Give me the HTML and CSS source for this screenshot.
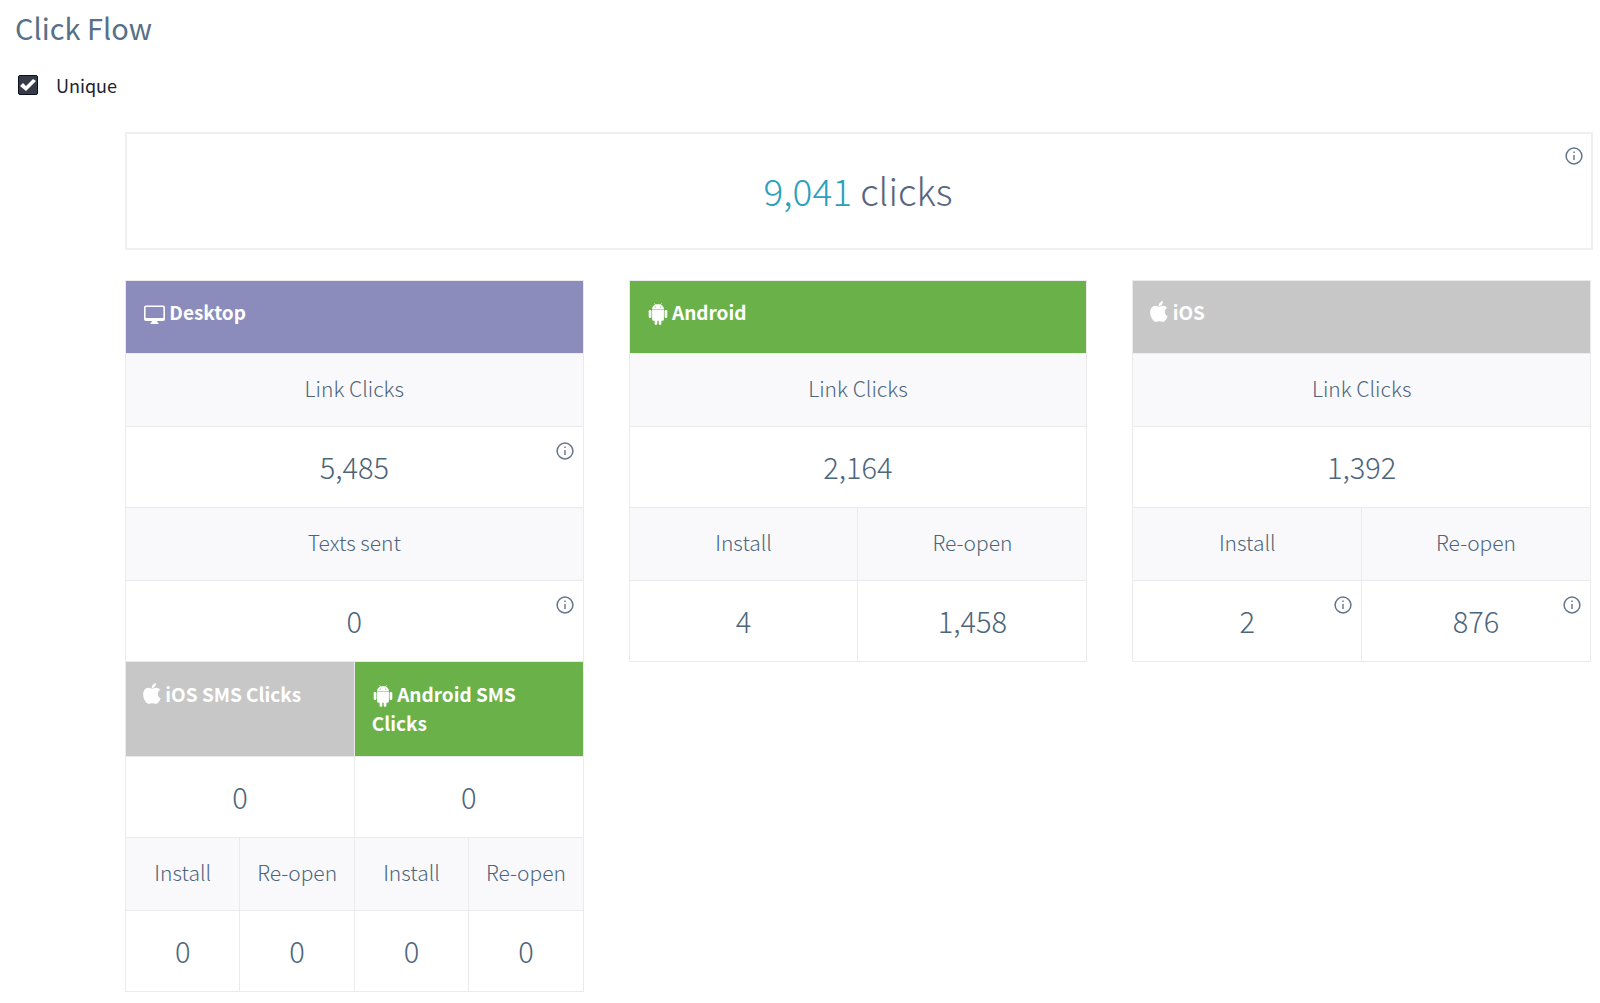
FILE: index.html
```html
<!DOCTYPE html>
<html lang="en">
<head>
<meta charset="utf-8">
<meta name="viewport" content="width=device-width, initial-scale=1">
<title>Click Flow</title>
<link rel="stylesheet" href="styles.css">
</head>
<body>
<svg class="sprite" aria-hidden="true">
  <symbol id="info" viewBox="0 0 18 18">
    <circle cx="9" cy="9" r="7.9" fill="none" stroke="currentColor" stroke-width="1.5"/>
    <path d="M8.3 4.6h1.4v1.5H8.3zM8.3 7.9h1.4v5.2H8.3z" fill="currentColor"/>
  </symbol>
  <symbol id="desktop" viewBox="0 0 21 20">
    <path fill="currentColor" fill-rule="evenodd" d="M2 0.5h17a2 2 0 0 1 2 2v11.500a2 2 0 0 1-2 2h-6c0 1.400 1.500 1.700 1.500 2.500q0 .5-.5.5H7q-.5 0-.5-.5C6.500 17.700 8 17.400 8 16H2a2 2 0 0 1-2-2V2.500a2 2 0 0 1 2-2zM2.200 2a.6.6 0 0 0-.6.6v9.800a.6.6 0 0 0 .6.6h16.600a.6.6 0 0 0 .6-.6V2.600a.6.6 0 0 0-.6-.6z"/>
  </symbol>
  <symbol id="android" viewBox="0 0 19 22">
    <path fill="currentColor" fill-rule="evenodd" d="M3.500 6.400C3.600 4.300 4.800 2.700 6.600 1.800L5.600.2l.4-.2 1 1.600c1.600-.6 3.400-.6 5 0L13 0l.4.2-1 1.600c1.800.9 3 2.500 3.100 4.600zM6.700 3.500a.6.6 0 1 0 0 1.200.6.600 0 0 0 0-1.200zm5.600 0a.6.600 0 1 0 0 1.200.6.600 0 0 0 0-1.200z"/>
    <path fill="currentColor" d="M3.600 7h11.800v9.200a1.500 1.500 0 0 1-1.500 1.500h-1v2.900a1.300 1.300 0 0 1-2.700 0v-2.900H8.800v2.900a1.300 1.300 0 0 1-2.700 0v-2.900h-1a1.500 1.500 0 0 1-1.500-1.500z"/>
    <rect x=".2" y="6.900" width="2.700" height="8.200" rx="1.350" fill="currentColor"/>
    <rect x="16.100" y="6.900" width="2.700" height="8.200" rx="1.350" fill="currentColor"/>
  </symbol>
  <symbol id="apple" viewBox="192 0 1408 1664">
    <path fill="currentColor" d="M1585 1215q-39 125-123 250-129 196-257 196-49 0-140-32-86-32-151-32-61 0-142 33-81 34-132 34-152 0-301-259-147-261-147-503 0-228 113-374 113-144 284-144 72 0 177 30 104 30 138 30 45 0 143-34 102-34 173-34 119 0 213 65 52 36 104 100-79 67-114 118-65 94-65 207 0 124 69 223t158 126zm-376-1173q0 61-29 136-30 75-93 138-54 54-108 72-37 11-104 17 3-149 78-257 74-107 250-148 1 3 2.500 11t2.500 11q0 4 .5 10t.5 10z"/>
  </symbol>
</svg>

<main class="page">
  <h1 class="title">Click Flow</h1>
  <label class="unique"><input class="checkbox" type="checkbox" checked>Unique</label>

  <div class="flow">
    <section class="total">
      <p class="total-text"><span class="total-count">9,041</span> clicks</p>
      <button class="info" type="button" aria-label="About clicks"><svg><use href="#info"/></svg></button>
    </section>

    <div class="platforms">
      <table class="platform">
        <tr><th class="head desktop" colspan="4"><svg class="icon-desktop"><use href="#desktop"/></svg> Desktop</th></tr>
        <tr><th class="label" colspan="4">Link Clicks</th></tr>
        <tr><td class="value" colspan="4">5,485<button class="info" type="button" aria-label="About link clicks"><svg><use href="#info"/></svg></button></td></tr>
        <tr><th class="label" colspan="4">Texts sent</th></tr>
        <tr><td class="value" colspan="4">0<button class="info" type="button" aria-label="About texts sent"><svg><use href="#info"/></svg></button></td></tr>
        <tr>
          <th class="head sms ios" colspan="2"><svg class="icon-apple"><use href="#apple"/></svg> iOS SMS Clicks</th>
          <th class="head sms android" colspan="2"><svg class="icon-android"><use href="#android"/></svg> Android SMS Clicks</th>
        </tr>
        <tr><td class="value" colspan="2">0</td><td class="value" colspan="2">0</td></tr>
        <tr><th class="label">Install</th><th class="label">Re-open</th><th class="label">Install</th><th class="label">Re-open</th></tr>
        <tr><td class="value">0</td><td class="value">0</td><td class="value">0</td><td class="value">0</td></tr>
      </table>

      <table class="platform">
        <tr><th class="head android" colspan="2"><svg class="icon-android"><use href="#android"/></svg> Android</th></tr>
        <tr><th class="label" colspan="2">Link Clicks</th></tr>
        <tr><td class="value" colspan="2">2,164</td></tr>
        <tr><th class="label">Install</th><th class="label">Re-open</th></tr>
        <tr><td class="value">4</td><td class="value">1,458</td></tr>
      </table>

      <table class="platform">
        <tr><th class="head ios" colspan="2"><svg class="icon-apple"><use href="#apple"/></svg> iOS</th></tr>
        <tr><th class="label" colspan="2">Link Clicks</th></tr>
        <tr><td class="value" colspan="2">1,392</td></tr>
        <tr><th class="label">Install</th><th class="label">Re-open</th></tr>
        <tr>
          <td class="value">2<button class="info" type="button" aria-label="About installs"><svg><use href="#info"/></svg></button></td>
          <td class="value">876<button class="info" type="button" aria-label="About re-opens"><svg><use href="#info"/></svg></button></td>
        </tr>
      </table>
    </div>
  </div>
</main>
</body>
</html>
```
FILE: styles.css
```css
* { box-sizing: border-box; }

body {
  margin: 0;
  background: #fff;
  color: #4d657b;
  font-family: "Noto Sans CJK SC", "Noto Sans", sans-serif;
  font-weight: 300;
}

.sprite { display: none; }

.page { padding: 6px 7px 8px 15px; }

.title {
  margin: 0;
  font-size: 29px;
  line-height: 42px;
  font-weight: 400;
  color: #587087;
}

.unique {
  display: flex;
  align-items: center;
  gap: 18px;
  width: max-content;
  margin: 22px 0 0 3px;
  font-size: 18px;
  line-height: 30px;
  font-weight: 400;
  color: #1b2230;
}

.checkbox {
  appearance: none;
  width: 20px;
  height: 20px;
  margin: 0;
  border: 1px solid #0c1020;
  border-radius: 2px;
  background: #373b48;
}

.checkbox:checked::before {
  content: "";
  display: block;
  width: 18px;
  height: 18px;
  background: #fff;
  clip-path: polygon(1px 10px, 4px 7px, 7px 10px, 14px 3px, 17px 5px, 7px 15px);
}

.flow { margin: 32px 0 0 110px; }

.total {
  position: relative;
  display: flex;
  align-items: center;
  justify-content: center;
  height: 118px;
  padding: 0 2px 2px 0;
  border: 2px solid #efefef;
}

.total-text {
  margin: 0;
  font-size: 37px;
  line-height: 54px;
  color: #56667e;
}

.total-count { color: #2b9fbc; }

.info {
  position: absolute;
  top: 15px;
  right: 9px;
  width: 18px;
  height: 18px;
  padding: 0;
  border: 0;
  background: none;
  color: #64748a;
}

.total .info { top: 13px; right: 8px; }

.info svg { display: block; width: 18px; height: 18px; }

.platforms {
  display: grid;
  grid-template-columns: repeat(3, 1fr);
  align-items: start;
  gap: 45px;
  margin: 30px 2px 0 0;
}

.platform {
  width: 100%;
  table-layout: fixed;
  border-collapse: collapse;
}

.head, .label, .value {
  position: relative;
  padding: 0 0 2px;
  border: 1px solid #ebebeb;
  text-align: center;
}

.head {
  height: 73px;
  padding: 16px 17px 0;
  text-align: left;
  vertical-align: top;
  font-size: 19px;
  line-height: 29px;
  font-weight: 700;
  color: #fff;
}

.head.sms { height: 95px; padding-top: 17px; }
.desktop { background: #8c8cbc; }
.android { background: #6bb14a; }
.ios { background: #c7c7c7; }

.label {
  height: 73px;
  padding-bottom: 5px;
  background: #f9f9fb;
  font-size: 21px;
  line-height: 32px;
  font-weight: 300;
}

.value {
  height: 81px;
  font-size: 29px;
  line-height: 42px;
}

.head svg { vertical-align: -5px; }
.icon-desktop { width: 21px; height: 20px; margin-left: 1px; }
.icon-android { width: 20px; height: 22px; margin-left: 1px; }
.head .icon-apple { width: 18px; height: 21px; vertical-align: -2px; }
```
